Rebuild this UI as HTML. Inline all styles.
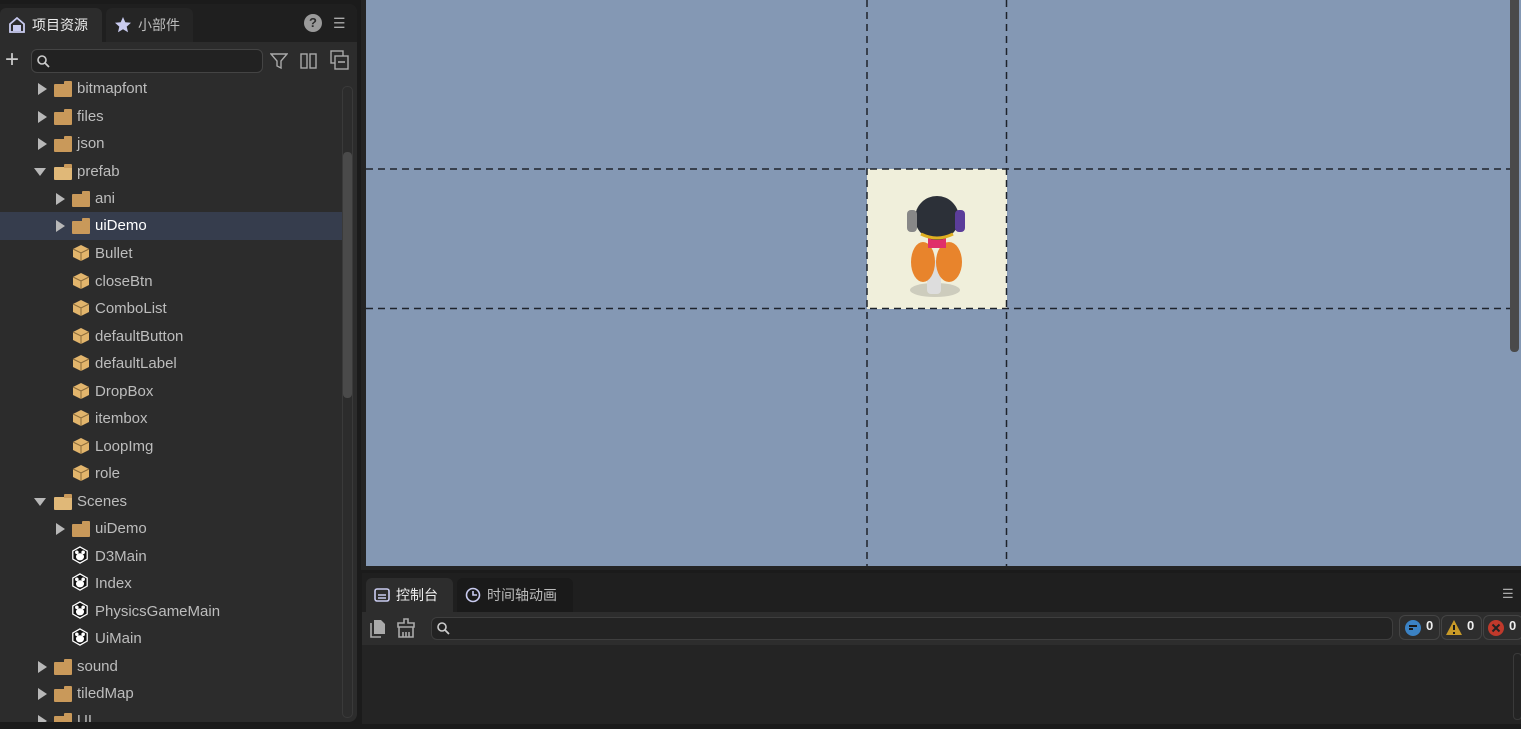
<!DOCTYPE html>
<html><head><meta charset="utf-8"><style>
*{box-sizing:border-box;margin:0;padding:0}
body{width:1521px;height:729px;background:#1b1b1b;position:relative;overflow:hidden;font-family:"Liberation Sans","Noto Sans CJK SC",sans-serif;font-size:15px;color:#c8c8c8}
.abs{position:absolute}
#left{left:0;top:4px;width:357px;height:718px;background:#2c2c2c;border-radius:0 8px 8px 0}
#tabs{left:0;top:0;width:357px;height:38px;background:#1f1f1f;border-radius:0 8px 0 0}
.tab{top:4px;height:34px;border-radius:6px 6px 0 0;display:flex;align-items:center;padding-left:8px;gap:6px;font-size:14px}
.row{position:absolute;left:0;width:342px;height:27px;display:flex;align-items:center;font-size:15px;color:#bdbdbd}
.arr{width:0;height:0;border-left:9px solid #b8b8b8;border-top:6px solid transparent;border-bottom:6px solid transparent;position:absolute}
.arrd{width:0;height:0;border-top:8px solid #b8b8b8;border-left:6px solid transparent;border-right:6px solid transparent;position:absolute}
.fold{position:absolute;width:18px;height:13px;background:#c9995a;border-radius:1px}
.fold:before{content:"";position:absolute;left:10px;top:-3px;width:8px;height:4px;background:#c9995a;border-radius:1px 1px 0 0}
.box{position:absolute;width:18px;height:18px}
.txt{position:absolute;top:5px}
</style></head><body>
<div id="left" class="abs">
 <div id="tabs" class="abs">
  <div class="tab abs" style="left:0;width:102px;background:#2c2c2c;color:#eee">
   <svg width="18" height="18" viewBox="0 0 18 18"><path d="M2 8 9 2 16 8V16H2Z" fill="none" stroke="#c9cbf0" stroke-width="1.8"/><rect x="5" y="9" width="8" height="6" fill="#c9cbf0"/></svg>项目资源</div>
  <div class="tab abs" style="left:106px;width:87px;background:#252525;color:#bbb">
   <svg width="18" height="18" viewBox="0 0 18 18"><path d="M9 1 11.3 6.2 17 6.8 12.7 10.6 14 16.3 9 13.3 4 16.3 5.3 10.6 1 6.8 6.7 6.2Z" fill="#c9cbf0"/></svg>小部件</div>
  <div class="abs" style="left:304px;top:10px;width:18px;height:18px;border-radius:9px;background:#9a9a9a;color:#2c2c2c;font-weight:bold;font-size:13px;text-align:center;line-height:18px">?</div>
  <div class="abs" style="left:333px;top:11px;color:#aaa;font-size:14px;line-height:16px">☰</div>
 </div>
 <div class="abs" style="left:5px;top:45px;color:#ccc;font-size:24px;line-height:22px">+</div>
 <div class="abs" style="left:31px;top:45px;width:232px;height:24px;border:1px solid #444;border-radius:6px;background:#222"></div>
 <svg class="abs" style="left:37px;top:51px" width="13" height="13"><circle cx="5" cy="5" r="4" fill="none" stroke="#ccc" stroke-width="1.6"/><path d="M8 8 12 12" stroke="#ccc" stroke-width="1.8"/></svg>
 <svg class="abs" style="left:270px;top:48px" width="18" height="18"><path d="M1 2H17L11 9V16L7 14V9Z" fill="none" stroke="#aaa" stroke-width="1.4"/></svg>
 <svg class="abs" style="left:300px;top:48px" width="18" height="18"><rect x="1" y="2" width="6" height="14" fill="none" stroke="#aaa" stroke-width="1.4"/><rect x="10" y="2" width="6" height="14" fill="none" stroke="#aaa" stroke-width="1.4"/></svg>
 <svg class="abs" style="left:330px;top:46px" width="19" height="20"><rect x="1" y="1" width="12" height="12" fill="none" stroke="#aaa" stroke-width="1.4"/><rect x="5" y="6" width="13" height="13" fill="#2c2c2c" stroke="#aaa" stroke-width="1.4"/><path d="M8 12H15" stroke="#aaa" stroke-width="1.6"/></svg>
 <div class="abs" style="left:342px;top:82px;width:11px;height:632px;border:1px solid #3a3a3a;border-radius:5px"></div>
 <div class="abs" style="left:343px;top:148px;width:9px;height:246px;background:#4a4a4a;border-radius:4px"></div>
</div>
<div id="tree" class="abs" style="left:0;top:1px">
<div class="row" style="top:74px"><div class="arr" style="left:38px"></div><div class="fold" style="left:54px;top:9px"></div><span class="txt" style="left:77px">bitmapfont</span></div>
<div class="row" style="top:102px"><div class="arr" style="left:38px"></div><div class="fold" style="left:54px;top:9px"></div><span class="txt" style="left:77px">files</span></div>
<div class="row" style="top:129px"><div class="arr" style="left:38px"></div><div class="fold" style="left:54px;top:9px"></div><span class="txt" style="left:77px">json</span></div>
<div class="row" style="top:157px"><div class="arrd" style="left:34px;top:10px"></div><div class="fold" style="left:54px;top:9px;background:#e0b878"></div><span class="txt" style="left:77px">prefab</span></div>
<div class="row" style="top:184px"><div class="arr" style="left:56px"></div><div class="fold" style="left:72px;top:9px"></div><span class="txt" style="left:95px">ani</span></div>
<div class="row" style="top:211px;height:28px;background:#363d4d;color:#fff"><div class="arr" style="left:56px"></div><div class="fold" style="left:72px;top:9px"></div><span class="txt" style="left:95px">uiDemo</span></div>
<div class="row" style="top:239px"><svg class="box" style="left:72px;top:4px" viewBox="0 0 18 18"><path d="M9 1 17 5V13L9 17 1 13V5Z" fill="#e2b56c"/><path d="M1 5 9 9 17 5M9 9V17" stroke="#8a6a3a" fill="none"/></svg><span class="txt" style="left:95px">Bullet</span></div>
<div class="row" style="top:267px"><svg class="box" style="left:72px;top:4px" viewBox="0 0 18 18"><path d="M9 1 17 5V13L9 17 1 13V5Z" fill="#e2b56c"/><path d="M1 5 9 9 17 5M9 9V17" stroke="#8a6a3a" fill="none"/></svg><span class="txt" style="left:95px">closeBtn</span></div>
<div class="row" style="top:294px"><svg class="box" style="left:72px;top:4px" viewBox="0 0 18 18"><path d="M9 1 17 5V13L9 17 1 13V5Z" fill="#e2b56c"/><path d="M1 5 9 9 17 5M9 9V17" stroke="#8a6a3a" fill="none"/></svg><span class="txt" style="left:95px">ComboList</span></div>
<div class="row" style="top:322px"><svg class="box" style="left:72px;top:4px" viewBox="0 0 18 18"><path d="M9 1 17 5V13L9 17 1 13V5Z" fill="#e2b56c"/><path d="M1 5 9 9 17 5M9 9V17" stroke="#8a6a3a" fill="none"/></svg><span class="txt" style="left:95px">defaultButton</span></div>
<div class="row" style="top:349px"><svg class="box" style="left:72px;top:4px" viewBox="0 0 18 18"><path d="M9 1 17 5V13L9 17 1 13V5Z" fill="#e2b56c"/><path d="M1 5 9 9 17 5M9 9V17" stroke="#8a6a3a" fill="none"/></svg><span class="txt" style="left:95px">defaultLabel</span></div>
<div class="row" style="top:377px"><svg class="box" style="left:72px;top:4px" viewBox="0 0 18 18"><path d="M9 1 17 5V13L9 17 1 13V5Z" fill="#e2b56c"/><path d="M1 5 9 9 17 5M9 9V17" stroke="#8a6a3a" fill="none"/></svg><span class="txt" style="left:95px">DropBox</span></div>
<div class="row" style="top:404px"><svg class="box" style="left:72px;top:4px" viewBox="0 0 18 18"><path d="M9 1 17 5V13L9 17 1 13V5Z" fill="#e2b56c"/><path d="M1 5 9 9 17 5M9 9V17" stroke="#8a6a3a" fill="none"/></svg><span class="txt" style="left:95px">itembox</span></div>
<div class="row" style="top:432px"><svg class="box" style="left:72px;top:4px" viewBox="0 0 18 18"><path d="M9 1 17 5V13L9 17 1 13V5Z" fill="#e2b56c"/><path d="M1 5 9 9 17 5M9 9V17" stroke="#8a6a3a" fill="none"/></svg><span class="txt" style="left:95px">LoopImg</span></div>
<div class="row" style="top:459px"><svg class="box" style="left:72px;top:4px" viewBox="0 0 18 18"><path d="M9 1 17 5V13L9 17 1 13V5Z" fill="#e2b56c"/><path d="M1 5 9 9 17 5M9 9V17" stroke="#8a6a3a" fill="none"/></svg><span class="txt" style="left:95px">role</span></div>
<div class="row" style="top:487px"><div class="arrd" style="left:34px;top:10px"></div><div class="fold" style="left:54px;top:9px;background:#e0b878"></div><span class="txt" style="left:77px">Scenes</span></div>
<div class="row" style="top:514px"><div class="arr" style="left:56px"></div><div class="fold" style="left:72px;top:9px"></div><span class="txt" style="left:95px">uiDemo</span></div>
<div class="row" style="top:542px"><svg class="box" style="left:71px;top:3px" width="20" height="20" viewBox="0 0 20 20"><path d="M10 1 18 5.5V14.5L10 19 2 14.5V5.5Z" fill="#111" stroke="#fff" stroke-width="1.4"/><ellipse cx="10" cy="12" rx="4.5" ry="4" fill="#fff"/><circle cx="6.5" cy="7" r="2" fill="#fff"/><circle cx="13.5" cy="7" r="2" fill="#fff"/></svg><span class="txt" style="left:95px">D3Main</span></div>
<div class="row" style="top:569px"><svg class="box" style="left:71px;top:3px" width="20" height="20" viewBox="0 0 20 20"><path d="M10 1 18 5.5V14.5L10 19 2 14.5V5.5Z" fill="#111" stroke="#fff" stroke-width="1.4"/><ellipse cx="10" cy="12" rx="4.5" ry="4" fill="#fff"/><circle cx="6.5" cy="7" r="2" fill="#fff"/><circle cx="13.5" cy="7" r="2" fill="#fff"/></svg><span class="txt" style="left:95px">Index</span></div>
<div class="row" style="top:597px"><svg class="box" style="left:71px;top:3px" width="20" height="20" viewBox="0 0 20 20"><path d="M10 1 18 5.5V14.5L10 19 2 14.5V5.5Z" fill="#111" stroke="#fff" stroke-width="1.4"/><ellipse cx="10" cy="12" rx="4.5" ry="4" fill="#fff"/><circle cx="6.5" cy="7" r="2" fill="#fff"/><circle cx="13.5" cy="7" r="2" fill="#fff"/></svg><span class="txt" style="left:95px">PhysicsGameMain</span></div>
<div class="row" style="top:624px"><svg class="box" style="left:71px;top:3px" width="20" height="20" viewBox="0 0 20 20"><path d="M10 1 18 5.5V14.5L10 19 2 14.5V5.5Z" fill="#111" stroke="#fff" stroke-width="1.4"/><ellipse cx="10" cy="12" rx="4.5" ry="4" fill="#fff"/><circle cx="6.5" cy="7" r="2" fill="#fff"/><circle cx="13.5" cy="7" r="2" fill="#fff"/></svg><span class="txt" style="left:95px">UiMain</span></div>
<div class="row" style="top:652px"><div class="arr" style="left:38px"></div><div class="fold" style="left:54px;top:9px"></div><span class="txt" style="left:77px">sound</span></div>
<div class="row" style="top:679px"><div class="arr" style="left:38px"></div><div class="fold" style="left:54px;top:9px"></div><span class="txt" style="left:77px">tiledMap</span></div>
<div class="row" style="top:707px;height:14px;overflow:hidden"><div class="arr" style="left:38px;top:7px"></div><div class="fold" style="left:54px;top:8px"></div><span class="txt" style="left:77px;top:4px">UI</span></div>
</div>

<div class="abs" style="left:361px;top:0;width:1160px;height:570px;background:#242424"></div>
<div class="abs" style="left:366px;top:0;width:1155px;height:566px;background:#8498b4"></div>
<div class="abs" style="left:867px;top:169px;width:140px;height:140px;background:#f0efdb"></div>
<svg class="abs" style="left:366px;top:0" width="1145" height="566">
 <g stroke="#1e232b" stroke-width="1.5" stroke-dasharray="7,5">
 <line x1="0" y1="169" x2="1145" y2="169"/><line x1="0" y1="308.5" x2="1145" y2="308.5"/>
 <line x1="501" y1="0" x2="501" y2="566"/><line x1="640.5" y1="0" x2="640.5" y2="566"/>
 </g>
</svg>
<svg class="abs" style="left:895px;top:190px" width="90" height="115" viewBox="0 0 90 115">
 <ellipse cx="40" cy="100" rx="25" ry="7" fill="#b5b4a8" opacity=".6"/>
 <rect x="32" y="70" width="14" height="34" rx="4" fill="#ddd"/>
 <ellipse cx="28" cy="72" rx="12" ry="20" fill="#e8842c"/>
 <ellipse cx="54" cy="72" rx="13" ry="20" fill="#e8842c"/>
 <rect x="33" y="48" width="18" height="10" fill="#e0306a"/>
 <circle cx="42" cy="28" r="22" fill="#2c3038"/>
 <rect x="12" y="20" width="10" height="22" rx="4" fill="#888"/>
 <rect x="60" y="20" width="10" height="22" rx="4" fill="#5b3d9a"/>
 <path d="M26 44Q42 52 58 44" stroke="#e0b020" stroke-width="3" fill="none"/>
</svg>
<div class="abs" style="left:1510px;top:0;width:9px;height:352px;background:#4a4a4a;border-radius:0 0 4px 4px"></div>

<div class="abs" style="left:362px;top:573px;width:1159px;height:151px;background:#242424"></div>
<div class="abs" style="left:362px;top:573px;width:1159px;height:39px;background:#1f1f1f"></div>
<div class="abs" style="left:366px;top:578px;width:87px;height:34px;background:#2d2d2d;border-radius:6px 6px 0 0;display:flex;align-items:center;gap:6px;padding-left:8px;font-size:14px;color:#eee">
 <svg width="16" height="16"><rect x="1" y="2" width="14" height="12" rx="2" fill="none" stroke="#c9cbf0" stroke-width="1.6"/><path d="M4 8H12M4 11H12" stroke="#c9cbf0" stroke-width="1.4"/></svg>控制台</div>
<div class="abs" style="left:457px;top:578px;width:116px;height:34px;background:#1a1a1a;border-radius:6px 6px 0 0;display:flex;align-items:center;gap:6px;padding-left:8px;font-size:14px;color:#bbb">
 <svg width="16" height="16"><circle cx="8" cy="8" r="6.5" fill="none" stroke="#c9cbf0" stroke-width="1.6"/><path d="M8 4V8H12" stroke="#c9cbf0" stroke-width="1.6" fill="none"/></svg>时间轴动画</div>
<div class="abs" style="left:1502px;top:586px;color:#aaa;font-size:13px">☰</div>
<div class="abs" style="left:362px;top:612px;width:1159px;height:33px;background:#2d2d2d"></div>
<svg class="abs" style="left:370px;top:619px" width="16" height="19"><path d="M4 1H11L15 5V15H4Z" fill="#aaa"/><path d="M1 4V18H11" stroke="#aaa" stroke-width="1.6" fill="none"/></svg>
<svg class="abs" style="left:396px;top:618px" width="20" height="20"><path d="M8 1H12V5H18V9H2V5H8Z" fill="none" stroke="#aaa" stroke-width="1.6"/><path d="M3 9V19H17V9M7 14V19M10 14V19M13 14V19" stroke="#aaa" stroke-width="1.6" fill="none"/></svg>
<div class="abs" style="left:431px;top:617px;width:962px;height:23px;border:1px solid #3e3e3e;border-radius:6px;background:#232323"></div>
<svg class="abs" style="left:437px;top:622px" width="13" height="13"><circle cx="5" cy="5" r="4" fill="none" stroke="#ccc" stroke-width="1.6"/><path d="M8 8 12 12" stroke="#ccc" stroke-width="1.8"/></svg>
<div class="abs" style="left:1399px;top:615px;width:41px;height:25px;border:1px solid #444;border-radius:6px"></div>
<svg class="abs" style="left:1404px;top:619px" width="18" height="18"><circle cx="9" cy="9" r="8" fill="#3b82c4"/><path d="M5 7H13M5 10H9" stroke="#1a1a1a" stroke-width="2"/></svg>
<div class="abs" style="left:1426px;top:618px;color:#eee;font-weight:bold;font-size:13px">0</div>
<div class="abs" style="left:1441px;top:615px;width:41px;height:25px;border:1px solid #444;border-radius:6px"></div>
<svg class="abs" style="left:1445px;top:619px" width="18" height="17"><path d="M9 1 17 16H1Z" fill="#c89a28"/><path d="M9 6V11M9 13V15" stroke="#1a1a1a" stroke-width="2"/></svg>
<div class="abs" style="left:1467px;top:618px;color:#eee;font-weight:bold;font-size:13px">0</div>
<div class="abs" style="left:1483px;top:615px;width:40px;height:25px;border:1px solid #444;border-radius:6px"></div>
<svg class="abs" style="left:1487px;top:619px" width="18" height="18"><circle cx="9" cy="9" r="8" fill="#c0392b"/><path d="M5.5 5.5 12.5 12.5M12.5 5.5 5.5 12.5" stroke="#222" stroke-width="2"/></svg>
<div class="abs" style="left:1509px;top:618px;color:#eee;font-weight:bold;font-size:13px">0</div>
<div class="abs" style="left:1513px;top:653px;width:9px;height:67px;border:1px solid #3a3a3a;border-radius:4px"></div>
</body></html>
